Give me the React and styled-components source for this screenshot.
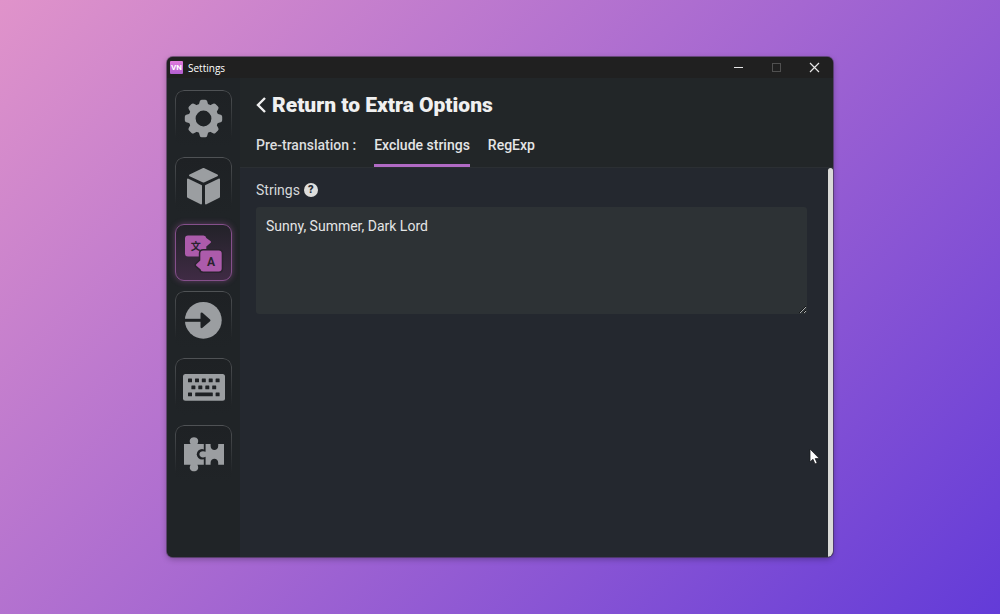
import React, { useState } from 'react'
import styled, { createGlobalStyle, css } from 'styled-components'

const GlobalStyle = createGlobalStyle`
    * {
        box-sizing: border-box;
    }

    body {
        margin: 0;
        font-family: Roboto, 'Liberation Sans', sans-serif;
        color: #e4e5e6;
    }

    button {
        padding: 0;
        border: 0;
        background: none;
        color: inherit;
        font: inherit;
        cursor: pointer;
    }
`

const GEAR_TEETH = [0, 45, 90, 135, 180, 225, 270, 315]

const GearIcon = () => (
    <svg viewBox="0 0 57 57">
        <g fill="currentColor">
            <circle cx="28.5" cy="28.5" r="11.4" fill="none" stroke="currentColor" strokeWidth="7" />
            {GEAR_TEETH.map(angle => (
                <path
                    key={angle}
                    d="M23.3 16.5 L24.8 11.3 Q25.2 9.8 26.7 9.8 H30.3 Q31.8 9.8 32.2 11.3 L33.7 16.5 Z"
                    transform={`rotate(${angle} 28.5 28.5)`}
                />
            ))}
        </g>
    </svg>
)

const CubeIcon = () => (
    <svg viewBox="0 0 57 57">
        <g fill="currentColor" stroke="currentColor" strokeWidth="2" strokeLinejoin="round">
            <path d="M28.5 12 L42 18.3 L28.5 24.6 L15 18.3 Z" />
            <path d="M13 22.6 L26 28.8 V46.4 L13 39.8 Z" />
            <path d="M44 22.6 L31 28.8 V46.4 L44 39.8 Z" />
        </g>
    </svg>
)

const TranslateIcon = () => (
    <svg viewBox="0 0 57 57">
        <path
            fill="currentColor"
            d="M13 11.5 H28.5 Q31 11.5 31.3 14 L35.4 17 Q36.6 18 35.4 19 L31.3 22.5 V32.5 H13 Q10 32.5 10 29.5 V14.5 Q10 11.5 13 11.5 Z"
        />
        <path
            fill="currentColor"
            stroke="#2a232e"
            strokeWidth="3"
            paintOrder="stroke"
            d="M28.3 26.5 H43.7 Q46.7 26.5 46.7 29.5 V44.5 Q46.7 47.5 43.7 47.5 H28.3 Q25.8 47.5 25.5 45.3 L21.6 42 Q20.4 41 21.6 40 L25.3 36.5 V29.5 Q25.3 26.5 28.3 26.5 Z"
        />
        <Glyph x="20.8" y="26" $size={10}>文</Glyph>
        <Glyph x="36" y="41.5" $size={12}>A</Glyph>
    </svg>
)

const ArrowIcon = () => (
    <svg viewBox="0 0 57 57">
        <circle cx="28.3" cy="29.3" r="18.4" fill="currentColor" />
        <g fill="#1e2124" stroke="#1e2124">
            <path d="M8 29.3 H27" strokeWidth="3" />
            <path d="M26.7 22.7 L34.3 29.3 L26.7 35.9 Z" strokeWidth="2.4" strokeLinejoin="round" />
        </g>
    </svg>
)

const KEYS = [
    [13, 20.5, 4], [20, 20.5, 4], [26.8, 20.5, 4], [33.7, 20.5, 4], [40.6, 20.5, 4],
    [16.4, 27.4, 4], [23.3, 27.4, 4], [30.3, 27.4, 4], [37.2, 27.4, 4],
    [13, 34.4, 4], [20.2, 34.4, 17.6], [40.6, 34.4, 4],
]

const KeyboardIcon = () => (
    <svg viewBox="0 0 57 57">
        <rect x="8" y="16" width="42" height="26.7" rx="2.5" fill="currentColor" />
        {KEYS.map(([x, y, width]) => (
            <rect key={`${x}-${y}`} x={x} y={y} width={width} height="3.8" rx="0.5" fill="#1e2124" />
        ))}
    </svg>
)

const PuzzleIcon = () => (
    <svg viewBox="0 0 57 57">
        <g fill="currentColor">
            <path d="M9 19 H15.6 C13.6 15.5 15.4 12.3 19 12.3 C22.6 12.3 24.4 15.5 22.4 19 H28.8 V39.7 H22.4 C24.4 43.2 22.6 46.3 19 46.3 C15.4 46.3 13.6 43.2 15.6 39.7 H9 Z" />
            <circle cx="27" cy="29.3" r="5.2" fill="#1e2124" />
            <path d="M30.6 19 H35.6 V21 C35.6 26.4 43.2 26.4 43.2 21 V19 H49 V39.7 H43.2 V37.7 C43.2 32.3 35.6 32.3 35.6 37.7 V39.7 H30.6 V31.8 C27.5 33.2 24.4 32 24.4 29.3 C24.4 26.6 27.5 25.4 30.6 26.8 Z" />
        </g>
    </svg>
)

const NAV_ITEMS = [
    { name: 'General', Icon: GearIcon },
    { name: 'Appearance', Icon: CubeIcon },
    { name: 'Translation', Icon: TranslateIcon },
    { name: 'Output', Icon: ArrowIcon },
    { name: 'Hotkeys', Icon: KeyboardIcon },
    { name: 'Extensions', Icon: PuzzleIcon },
]

const TABS = ['Exclude strings', 'RegExp']

const App = () => {
    const [section, setSection] = useState('Translation')
    const [tab, setTab] = useState('Exclude strings')
    const [strings, setStrings] = useState('Sunny, Summer, Dark Lord')

    return (
        <Desktop>
            <GlobalStyle />
            <Window>
                <TitleBar>
                    <Logo>VN</Logo>
                    <WindowTitle>Settings</WindowTitle>
                    <WindowButton aria-label="Minimize">
                        <svg width="11" height="11" viewBox="0 0 11 11"><path d="M1 5.5 H10" /></svg>
                    </WindowButton>
                    <WindowButton aria-label="Maximize" disabled>
                        <svg width="11" height="11" viewBox="0 0 11 11"><rect x="1.5" y="1.5" width="8" height="8" /></svg>
                    </WindowButton>
                    <WindowButton aria-label="Close">
                        <svg width="11" height="11" viewBox="0 0 11 11"><path d="M1 1 L10 10 M10 1 L1 10" /></svg>
                    </WindowButton>
                </TitleBar>

                <Body>
                    <SideBar>
                        {NAV_ITEMS.map(({ name, Icon }) => (
                            <NavButton
                                key={name}
                                aria-label={name}
                                $active={section === name}
                                onClick={() => setSection(name)}
                            >
                                <Icon />
                            </NavButton>
                        ))}
                    </SideBar>

                    <Main>
                        <Header>
                            <Heading>
                                <BackButton>
                                    <svg width="10" height="18" viewBox="0 0 10 18">
                                        <path d="M9 2 L2 9 L9 16" fill="none" stroke="currentColor" strokeWidth="2.4" />
                                    </svg>
                                    Return to Extra Options
                                </BackButton>
                            </Heading>
                            <TabBar>
                                <TabLabel>Pre-translation :</TabLabel>
                                {TABS.map(name => (
                                    <Tab key={name} $active={tab === name} onClick={() => setTab(name)}>
                                        {name}
                                    </Tab>
                                ))}
                            </TabBar>
                        </Header>

                        <Content>
                            <Form>
                                <FieldHead>
                                    <label htmlFor="strings">Strings</label>
                                    <Help aria-label="Help">?</Help>
                                </FieldHead>
                                <TextArea
                                    id="strings"
                                    spellCheck={false}
                                    value={strings}
                                    onChange={e => setStrings(e.target.value)}
                                />
                            </Form>
                            <ScrollThumb />
                        </Content>
                    </Main>
                </Body>

                <Pointer width="12" height="18" viewBox="0 0 12 18">
                    <path d="M1 1 V14 L4 11.3 L6 16 L8.2 15 L6.2 10.6 H10.4 Z" fill="#fff" stroke="#1a1c20" strokeWidth="0.8" />
                </Pointer>
            </Window>
        </Desktop>
    )
}

const Desktop = styled.div`
    display: flex;
    min-height: 100vh;
    padding: 57px 167px;
    background: linear-gradient(135deg, #e093ca 0%, #a567d1 50%, #633bd8 100%);
`

const Window = styled.section`
    position: relative;
    display: flex;
    flex-direction: column;
    flex: 1;
    min-width: 0;
    border-radius: 6px;
    overflow: hidden;
    background: #202427;
    box-shadow: 0 0 0 1px rgba(60, 50, 70, 0.6), 0 2px 6px rgba(0, 0, 0, 0.3);
`

const TitleBar = styled.div`
    display: flex;
    align-items: center;
    height: 21px;
    padding-left: 3px;
    background: #202020;
`

const Logo = styled.span`
    width: 13px;
    margin-right: 5px;
    border-radius: 1px;
    background: linear-gradient(#e07bdc, #b25fd0);
    color: #fff;
    font-size: 8px;
    font-weight: 700;
    line-height: 13px;
    text-align: center;
`

const WindowTitle = styled.span`
    flex: 1;
    font-family: 'Open Sans', sans-serif;
    font-size: 10px;
    color: #fff;
`

const WindowButton = styled.button`
    display: flex;
    align-items: center;
    justify-content: center;
    width: 38px;
    height: 21px;

    svg {
        fill: none;
        stroke: #e6e6e6;
        stroke-width: 1.2;
    }

    &:disabled svg {
        stroke: #505050;
        stroke-width: 1;
    }
`

const Body = styled.div`
    display: flex;
    flex: 1;
`

const SideBar = styled.nav`
    display: flex;
    flex-direction: column;
    gap: 10px;
    width: 73px;
    padding: 12px 8px;
    background: #202427;
`

const NavButton = styled.button`
    position: relative;
    width: 57px;
    height: 57px;
    border-radius: 9px;
    color: #9b9ea1;
    background: linear-gradient(#1e2124, #202427);

    svg {
        display: block;
    }

    &::before {
        content: '';
        position: absolute;
        inset: 0;
        border: 1px solid #505356;
        border-radius: 9px;
        mask-image: linear-gradient(#000, transparent 85%);
    }

    ${({ $active }) => $active && css`
        color: #ac5bab;
        background: linear-gradient(#222228, #402b45);
        box-shadow: 0 0 6px rgba(172, 91, 171, 0.45);

        &::before {
            border-color: #85508b;
            mask-image: none;
        }
    `}
`

const Glyph = styled.text`
    font-family: Roboto, 'Noto Sans CJK SC', sans-serif;
    font-size: ${({ $size }) => $size}px;
    font-weight: 700;
    text-anchor: middle;
    fill: #2a232e;
`

const Main = styled.main`
    display: flex;
    flex-direction: column;
    flex: 1;
    min-width: 0;
    background: #24282f;
`

const Header = styled.header`
    padding: 14px 16px 0;
    border-bottom: 1px solid #2b2f33;
    background: #222628;
`

const Heading = styled.h1`
    margin: 0;
    font-size: 21px;
    font-weight: 900;
    line-height: 26px;
    color: #f0f0f0;
`

const BackButton = styled.button`
    display: flex;
    align-items: center;
    gap: 6px;
`

const TabBar = styled.div`
    display: flex;
    gap: 18px;
    margin-top: 16px;
    font-size: 14px;
    font-weight: 500;
    line-height: 22px;
`

const TabLabel = styled.span`
    color: #dcdddf;
`

const Tab = styled.button`
    height: 33px;
    padding-bottom: 8px;
    border-bottom: 3px solid ${({ $active }) => ($active ? '#b06ac4' : 'transparent')};
`

const Content = styled.div`
    display: flex;
    flex: 1;
`

const Form = styled.form`
    flex: 1;
    padding: 12px 21px 12px 16px;
`

const FieldHead = styled.div`
    display: flex;
    align-items: center;
    gap: 4px;
    margin-bottom: 7px;
    font-size: 14px;
    line-height: 20px;
    color: #d6d8da;
`

const Help = styled.span`
    width: 14px;
    border-radius: 50%;
    background: #dededc;
    color: #24282f;
    font-size: 11px;
    font-weight: 900;
    line-height: 14px;
    text-align: center;
`

const TextArea = styled.textarea`
    display: block;
    width: 100%;
    height: 107px;
    padding: 9px 10px;
    border: 0;
    border-radius: 3px;
    outline: 0;
    resize: vertical;
    background: #2d3235;
    color: #e4e5e6;
    font-family: inherit;
    font-size: 14px;
    line-height: 20px;
    color-scheme: dark;
`

const ScrollThumb = styled.div`
    width: 5px;
    border-radius: 3px 3px 0 0;
    background: #dadad8;
`

const Pointer = styled.svg`
    position: absolute;
    right: 12px;
    bottom: 91px;
`

export default App
